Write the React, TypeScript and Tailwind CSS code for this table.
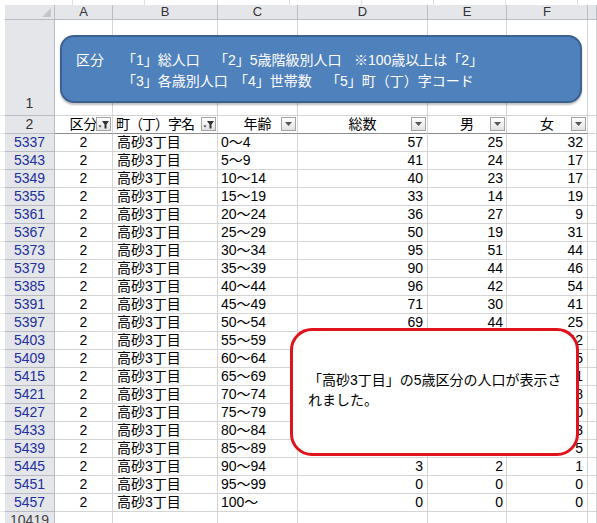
const rows: [string, string, string, string, string][] = [
  ['5337', '0～4', '57', '25', '32'],
  ['5343', '5～9', '41', '24', '17'],
  ['5349', '10～14', '40', '23', '17'],
  ['5355', '15～19', '33', '14', '19'],
  ['5361', '20～24', '36', '27', '9'],
  ['5367', '25～29', '50', '19', '31'],
  ['5373', '30～34', '95', '51', '44'],
  ['5379', '35～39', '90', '44', '46'],
  ['5385', '40～44', '96', '42', '54'],
  ['5391', '45～49', '71', '30', '41'],
  ['5397', '50～54', '69', '44', '25'],
  ['5403', '55～59', '80', '38', '42'],
  ['5409', '60～64', '72', '37', '35'],
  ['5415', '65～69', '64', '33', '31'],
  ['5421', '70～74', '63', '25', '38'],
  ['5427', '75～79', '45', '15', '30'],
  ['5433', '80～84', '30', '7', '23'],
  ['5439', '85～89', '10', '5', '5'],
  ['5445', '90～94', '3', '2', '1'],
  ['5451', '95～99', '0', '0', '0'],
  ['5457', '100～', '0', '0', '0'],
];

const grid =
  'grid grid-cols-[5px_50px_58px_105px_80px_130px_79px_81px_9px]';
const cell = 'border-r border-b border-[#d4d4d4] bg-white';
const rowHead =
  'border-r border-b border-[#b9bdc3] bg-[#e4e6ea] flex items-center justify-center';
const headCell =
  'relative border-r border-b border-b-[#8c8c8c] border-r-[#d4d4d4]';

/* filter dropdown button in the header row */
function FilterButton({ active }: { active?: boolean }) {
  return (
    <span className="absolute right-[1px] top-[1px] flex h-[14px] w-[15px] items-center justify-center border border-[#a3a3a3] bg-gradient-to-b from-[#ffffff] to-[#e2e2e2]">
      {active ? (
        <svg width="11" height="9" viewBox="0 0 11 9">
          <path d="M4 1h7L8.5 4.5V8.5H6.5V4.5Z" fill="#333" />
          <path d="M0.5 5.5h3L2 7.5Z" fill="#333" />
        </svg>
      ) : (
        <svg width="7" height="4" viewBox="0 0 7 4">
          <path d="M0 0h7L3.5 4Z" fill="#555" />
        </svg>
      )}
    </span>
  );
}

function LeftStrip() {
  return <div className="border-b border-[#e6e6e6] bg-white" />;
}

export default function App() {
  return (
    <div className="relative h-[523px] w-[597px] overflow-hidden bg-white font-['Liberation_Sans','Noto_Sans_CJK_JP',sans-serif] text-[14px] text-black">
      {/* strip of the sheet behind */}
      <div className="grid h-[5px] grid-cols-[73px_72px_73px_72px_72px_72px_72px_72px_39px]">
        {Array.from({ length: 9 }).map((_, i) => (
          <div key={i} className="border-r border-[#e0e0e0]" />
        ))}
      </div>

      {/* column letters */}
      <div className={`${grid} h-[15px] text-[13px] leading-[14px] text-[#333]`}>
        <div className="bg-white" />
        <div className="relative border-r border-b border-[#b9bdc3] bg-[#e4e6ea]">
          <svg className="absolute bottom-[2px] right-[3px]" width="9" height="9" viewBox="0 0 9 9">
            <path d="M9 0V9H0Z" fill="#c3c6cb" />
          </svg>
        </div>
        {['A', 'B', 'C', 'D', 'E', 'F', ''].map((c, i) => (
          <div
            key={i}
            className="flex items-center justify-center border-r border-b border-[#b9bdc3] bg-[#e4e6ea]"
          >
            {c}
          </div>
        ))}
      </div>

      {/* row 1 */}
      <div className={`${grid} h-[96px]`}>
        <LeftStrip />
        <div className={`${rowHead} items-end pb-[1px] text-[#333]`}>1</div>
        {Array.from({ length: 7 }).map((_, i) => (
          <div key={i} className={cell} />
        ))}
      </div>

      {/* row 2: table header */}
      <div className={`${grid} h-[18px] leading-[17px]`}>
        <LeftStrip />
        <div className={`${rowHead} text-[#333]`}>2</div>
        <div className={`${headCell} text-center`}>
          区分
          <FilterButton active />
        </div>
        <div className={`${headCell} pl-[3px] tracking-[-1px]`}>
          町（丁）字名
          <FilterButton active />
        </div>
        <div className={`${headCell} text-center`}>
          年齢
          <FilterButton />
        </div>
        <div className={`${headCell} text-center`}>
          総数
          <FilterButton />
        </div>
        <div className={`${headCell} text-center`}>
          男
          <FilterButton />
        </div>
        <div className={`${headCell} text-center`}>
          女
          <FilterButton />
        </div>
        <div className={cell} />
      </div>

      {/* data rows */}
      {rows.map(([n, age, total, m, f]) => (
        <div key={n} className={`${grid} h-[18px] leading-[17px]`}>
          <LeftStrip />
          <div className={`${rowHead} text-[#22309c]`}>{n}</div>
          <div className={`${cell} text-center`}>2</div>
          <div className={`${cell} pl-[4px]`}>高砂3丁目</div>
          <div className={`${cell} pl-[3px]`}>{age}</div>
          <div className={`${cell} pr-[4px] text-right`}>{total}</div>
          <div className={`${cell} pr-[3px] text-right`}>{m}</div>
          <div className={`${cell} pr-[4px] text-right`}>{f}</div>
          <div className={cell} />
        </div>
      ))}

      {/* next visible row, cut off */}
      <div className={`${grid} h-[18px] leading-[17px]`}>
        <LeftStrip />
        <div className={`${rowHead} text-[#444]`}>10419</div>
        {Array.from({ length: 7 }).map((_, i) => (
          <div key={i} className={cell} />
        ))}
      </div>

      {/* legend shape */}
      <div className="absolute left-[60px] top-[35px] h-[68px] w-[522px] rounded-[14px] border-2 border-[#3a6190] bg-[#4f81bd] pt-[13px] pl-[14px] text-[14px] leading-[21px] text-white shadow-[0_2px_2px_rgba(0,0,0,0.25)]">
        <div className="flex whitespace-nowrap">
          <span className="w-[46px] shrink-0">区分</span>
          <span className="w-[92px] shrink-0">「1」総人口</span>
          <span className="w-[140px] shrink-0">「2」5歳階級別人口</span>
          <span>※100歳以上は「2」</span>
        </div>
        <div className="flex whitespace-nowrap pl-[46px]">
          <span className="w-[112px] shrink-0">「3」各歳別人口</span>
          <span className="w-[92px] shrink-0">「4」世帯数</span>
          <span>「5」町（丁）字コード</span>
        </div>
      </div>

      {/* callout */}
      <div className="absolute left-[290px] top-[328px] flex h-[128px] w-[289px] flex-col justify-center rounded-[22px] border-[3px] border-[#e0121c] bg-white pl-[15px] pb-[4px] text-[14px] leading-[20px]">
        <div className="whitespace-nowrap">「高砂3丁目」の5歳区分の人口が表示さ</div>
        <div>れました。</div>
      </div>
    </div>
  );
}
